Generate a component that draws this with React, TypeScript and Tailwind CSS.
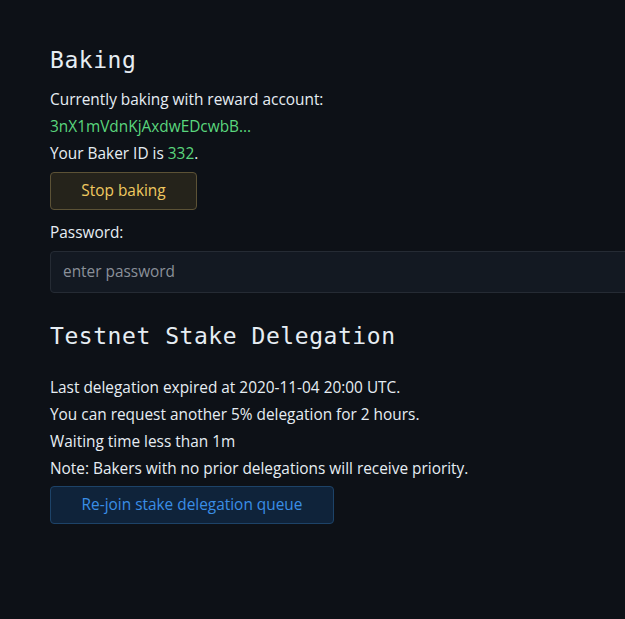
import React from "react";

export default function App() {
  return (
    <div className="w-[625px] h-[619px] overflow-hidden bg-[#0d1117] text-[#e6edf3]" style={{ fontFamily: '"Open Sans", "Noto Sans", sans-serif' }}>
      <div className="pl-[50px] pt-[44px] w-[700px]">
        <h1 className="text-[23px] leading-[32px] tracking-[0.55px] mb-[10px]" style={{ fontFamily: '"DejaVu Sans Mono", monospace' }}>Baking</h1>
        <div className="text-[15.4px] leading-[27px]">
          <div>Currently baking with reward account:</div>
          <div className="text-[#5ad67d]">3nX1mVdnKjAxdwEDcwbB...</div>
          <div>Your Baker ID is <span className="text-[#5ad67d]">332</span>.</div>
        </div>
        <button className="mt-[5px] w-[147px] h-[38px] rounded-[4px] border border-[#5c5236] bg-[#25231b] text-[#f0c960] text-[15.4px]">Stop baking</button>
        <div className="mt-[12px] text-[15.4px] leading-[22px]">Password:</div>
        <div className="mt-[7px] w-[620px] h-[42px] rounded-[4px] border border-[#252b34] bg-[#131922] flex items-center px-[12px]">
          <input className="bg-transparent outline-none w-full text-[15.4px] text-[#e6edf3] placeholder:text-[#8a9099]" placeholder="enter password" />
        </div>
        <h2 className="mt-[27px] text-[23px] leading-[32px] tracking-[0.55px]" style={{ fontFamily: '"DejaVu Sans Mono", monospace' }}>Testnet Stake Delegation</h2>
        <div className="mt-[22px] text-[15.4px] leading-[27px]">
          <div>Last delegation expired at 2020-11-04 20:00 UTC.</div>
          <div>You can request another 5% delegation for 2 hours.</div>
          <div>Waiting time less than 1m</div>
          <div>Note: Bakers with no prior delegations will receive priority.</div>
        </div>
        <button className="mt-[4px] w-[284px] h-[38px] rounded-[4px] border border-[#1d4368] bg-[#0f233a] text-[#3a8ee6] text-[15.4px]">Re-join stake delegation queue</button>
      </div>
    </div>
  );
}
